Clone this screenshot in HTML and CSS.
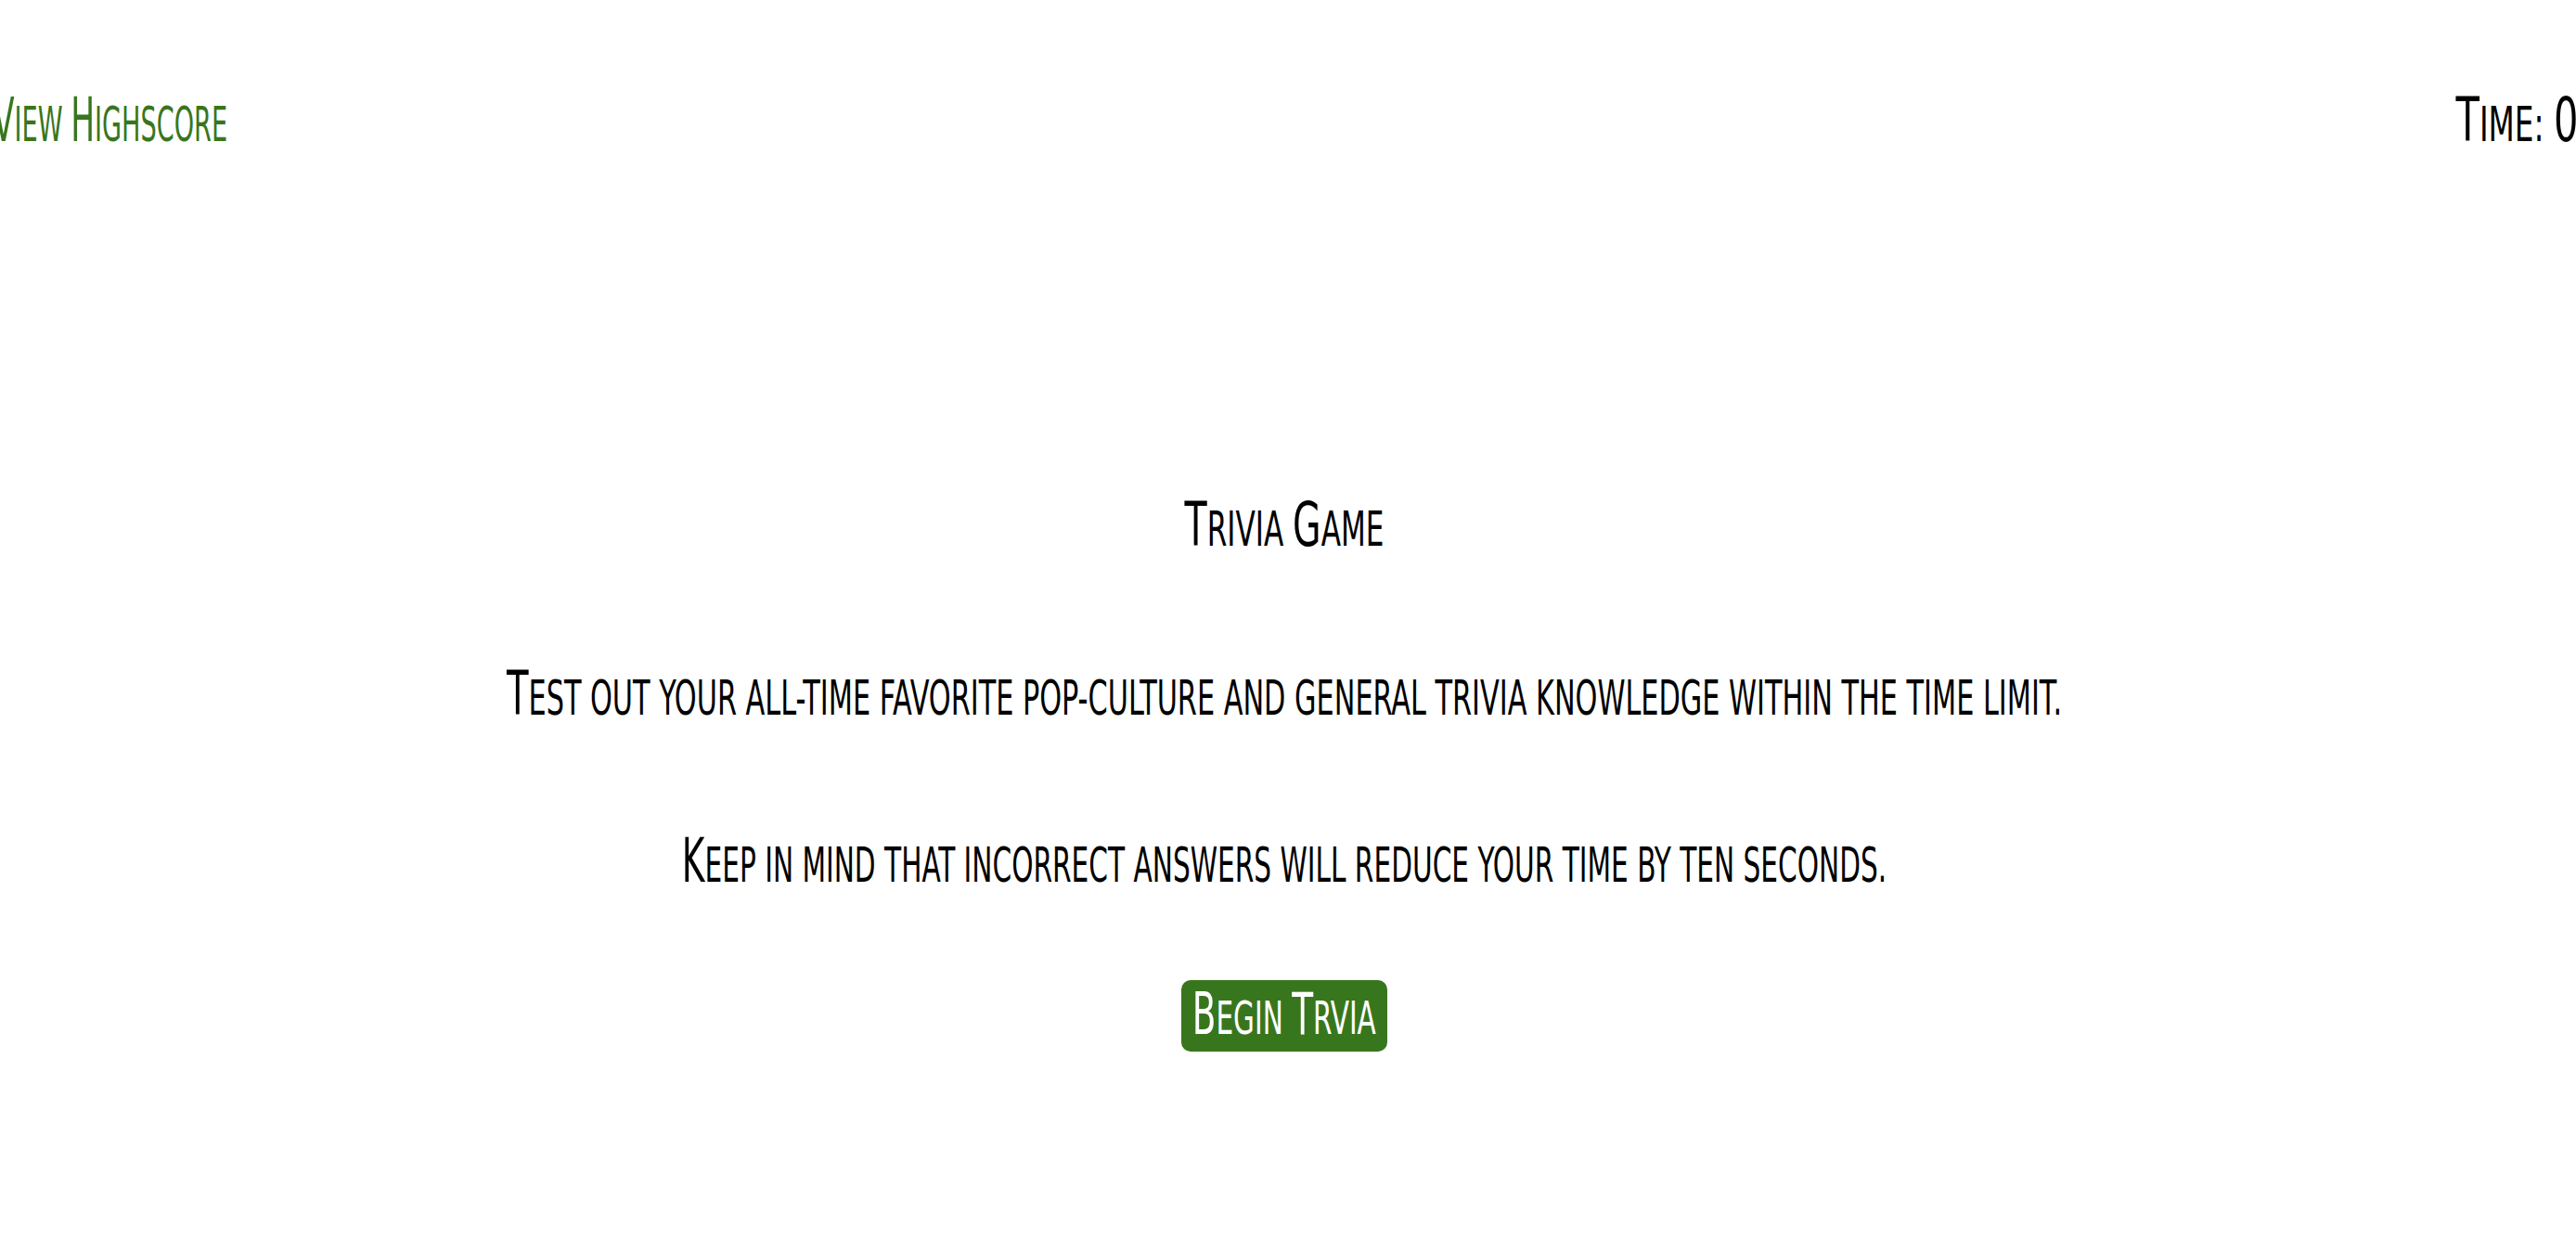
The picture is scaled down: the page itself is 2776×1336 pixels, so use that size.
FILE: index.html
```
<!DOCTYPE html>
<html lang="en">
<head>
<meta charset="utf-8">
<title>Trivia Game</title>
<link rel="stylesheet" href="styles.css">
</head>
<body>
<header class="top-bar">
  <a class="highscore-link" href="#"><span class="cap">V</span>iew <span class="cap">H</span>ighscore</a>
  <div class="timer"><span class="cap">T</span>ime: <span class="cap timer-value">0</span></div>
</header>
<main class="intro">
  <h1 class="intro-title"><span class="cap">T</span>rivia <span class="cap">G</span>ame</h1>
  <p class="intro-text intro-text-first"><span class="cap">T</span>est out your all-time favorite pop-culture and general trivia knowledge within the time limit.</p>
  <p class="intro-text intro-text-second"><span class="cap">K</span>eep in mind that incorrect answers will reduce your time by ten seconds.</p>
  <button class="start-button" type="button"><span class="start-label"><span class="cap">B</span>egin <span class="cap">T</span>rvia</span></button>
</main>
</body>
</html>
```
FILE: styles.css
```
html, body {
  margin: 0;
  padding: 0;
  background: #ffffff;
  overflow: hidden;
}

body {
  font-family: "DejaVu Sans Condensed", "DejaVu Sans", sans-serif;
  text-transform: uppercase;
  font-size: 52px;
  line-height: 66px;
  color: #000000;
}

.cap {
  font-size: 66px;
  line-height: 0;
}

.top-bar {
  display: flex;
  justify-content: space-between;
  align-items: flex-start;
  padding-top: 101px;
  margin: 0 -2px 0 -8px;
}

.highscore-link {
  display: block;
  color: #38761d;
  text-decoration: none;
  white-space: nowrap;
  transform: scaleX(0.58);
  transform-origin: left center;
}

.timer {
  white-space: nowrap;
  transform: scaleX(0.7);
  transform-origin: right center;
}

.intro {
  display: flex;
  flex-direction: column;
  align-items: center;
  padding-right: 8px;
}

.intro-title,
.intro-text {
  align-self: stretch;
  margin: 0;
  font-size: 52px;
  font-weight: normal;
  line-height: 66px;
  text-align: center;
  white-space: nowrap;
  transform: scaleX(0.633);
  transform-origin: center center;
}

.intro-title {
  margin-top: 370px;
  transform: scaleX(0.665);
}

.intro-text-first {
  margin-top: 116px;
  transform: scaleX(0.648);
}

.intro-text-second {
  margin-top: 114px;
}

.start-button {
  margin-top: 91px;
  width: 222px;
  height: 77px;
  padding: 11px 0 4px;
  display: flex;
  justify-content: center;
  align-items: flex-start;
  background: #38761d;
  color: #ffffff;
  border: none;
  border-radius: 10px;
  font-family: inherit;
  text-transform: uppercase;
  font-size: 49px;
  line-height: 62px;
  cursor: pointer;
}

.start-button .cap {
  font-size: 62px;
}

.start-label {
  display: block;
  white-space: nowrap;
  transform: scaleX(0.67);
  transform-origin: center center;
}
```
